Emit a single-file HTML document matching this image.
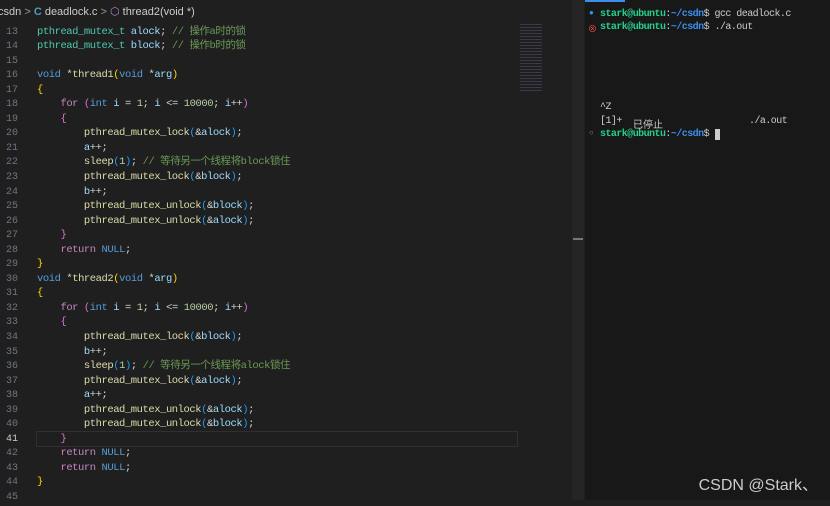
<!DOCTYPE html><html><head><meta charset="utf-8"><style>
body{margin:0;width:830px;height:500px;background:#1f1f1f;overflow:hidden;position:relative;font-family:"Liberation Mono","Noto Sans CJK SC",monospace;}
.bc{position:absolute;left:0;top:0;width:572px;height:22px;background:#1f1f1f;font:11px "Liberation Sans","Noto Sans CJK SC",sans-serif;color:#ccc;line-height:24px;white-space:nowrap}
.code{position:absolute;left:0;top:24.5px;width:572px;font-size:10.5px;letter-spacing:-0.44px}
.l{height:14.55px;line-height:14.55px;white-space:pre;position:relative}
.n{display:inline-block;width:18px;margin-right:19px;text-align:right;color:#6e7681;letter-spacing:0;font-size:10px}
.cur{outline:1px solid #303030}
.cur .n{color:#ccc}
.t{color:#4ec9b0}.v{color:#9cdcfe}.f{color:#dcdcaa}.k{color:#569cd6}.c{color:#c586c0}.m{color:#6a9955}.d{color:#b5cea8}.y{color:#ffd700}.p{color:#da70d6}.b{color:#179fff}.w{color:#d4d4d4}
.term{position:absolute;left:585px;top:0;right:0;bottom:0;background:#181818;font-size:10px;letter-spacing:-0.55px;color:#ccc}
.tl{position:absolute;left:15px;white-space:pre}
.g{color:#23d18b;font-weight:bold}.bl{color:#3b8eea;font-weight:bold}
</style></head><body>
<div class="bc"><span style="margin-left:-2px">csdn</span> <span style="color:#999">&gt;</span> <span style="color:#519aba;font-weight:bold">C</span> deadlock.c <span style="color:#999">&gt;</span> <span style="color:#b180d7">⬡</span> thread2(void *)</div>
<div class="code">
<div class="l"><span class="n">13</span><span class="t">pthread_mutex_t</span> <span class="v">alock</span><span class="w">;</span> <span class="m">// 操作a时的锁</span></div>
<div class="l"><span class="n">14</span><span class="t">pthread_mutex_t</span> <span class="v">block</span><span class="w">;</span> <span class="m">// 操作b时的锁</span></div>
<div class="l"><span class="n">15</span></div>
<div class="l"><span class="n">16</span><span class="k">void</span> <span class="w">*</span><span class="f">thread1</span><span class="y">(</span><span class="k">void</span> <span class="w">*</span><span class="v">arg</span><span class="y">)</span></div>
<div class="l"><span class="n">17</span><span class="y">{</span></div>
<div class="l"><span class="n">18</span>    <span class="c">for</span> <span class="p">(</span><span class="k">int</span> <span class="v">i</span> <span class="w">=</span> <span class="d">1</span><span class="w">;</span> <span class="v">i</span> <span class="w">&lt;=</span> <span class="d">10000</span><span class="w">;</span> <span class="v">i</span><span class="w">++</span><span class="p">)</span></div>
<div class="l"><span class="n">19</span>    <span class="p">{</span></div>
<div class="l"><span class="n">20</span>        <span class="f">pthread_mutex_lock</span><span class="b">(</span><span class="w">&amp;</span><span class="v">alock</span><span class="b">)</span><span class="w">;</span></div>
<div class="l"><span class="n">21</span>        <span class="v">a</span><span class="w">++;</span></div>
<div class="l"><span class="n">22</span>        <span class="f">sleep</span><span class="b">(</span><span class="d">1</span><span class="b">)</span><span class="w">;</span> <span class="m">// 等待另一个线程将block锁住</span></div>
<div class="l"><span class="n">23</span>        <span class="f">pthread_mutex_lock</span><span class="b">(</span><span class="w">&amp;</span><span class="v">block</span><span class="b">)</span><span class="w">;</span></div>
<div class="l"><span class="n">24</span>        <span class="v">b</span><span class="w">++;</span></div>
<div class="l"><span class="n">25</span>        <span class="f">pthread_mutex_unlock</span><span class="b">(</span><span class="w">&amp;</span><span class="v">block</span><span class="b">)</span><span class="w">;</span></div>
<div class="l"><span class="n">26</span>        <span class="f">pthread_mutex_unlock</span><span class="b">(</span><span class="w">&amp;</span><span class="v">alock</span><span class="b">)</span><span class="w">;</span></div>
<div class="l"><span class="n">27</span>    <span class="p">}</span></div>
<div class="l"><span class="n">28</span>    <span class="c">return</span> <span class="k">NULL</span><span class="w">;</span></div>
<div class="l"><span class="n">29</span><span class="y">}</span></div>
<div class="l"><span class="n">30</span><span class="k">void</span> <span class="w">*</span><span class="f">thread2</span><span class="y">(</span><span class="k">void</span> <span class="w">*</span><span class="v">arg</span><span class="y">)</span></div>
<div class="l"><span class="n">31</span><span class="y">{</span></div>
<div class="l"><span class="n">32</span>    <span class="c">for</span> <span class="p">(</span><span class="k">int</span> <span class="v">i</span> <span class="w">=</span> <span class="d">1</span><span class="w">;</span> <span class="v">i</span> <span class="w">&lt;=</span> <span class="d">10000</span><span class="w">;</span> <span class="v">i</span><span class="w">++</span><span class="p">)</span></div>
<div class="l"><span class="n">33</span>    <span class="p">{</span></div>
<div class="l"><span class="n">34</span>        <span class="f">pthread_mutex_lock</span><span class="b">(</span><span class="w">&amp;</span><span class="v">block</span><span class="b">)</span><span class="w">;</span></div>
<div class="l"><span class="n">35</span>        <span class="v">b</span><span class="w">++;</span></div>
<div class="l"><span class="n">36</span>        <span class="f">sleep</span><span class="b">(</span><span class="d">1</span><span class="b">)</span><span class="w">;</span> <span class="m">// 等待另一个线程将alock锁住</span></div>
<div class="l"><span class="n">37</span>        <span class="f">pthread_mutex_lock</span><span class="b">(</span><span class="w">&amp;</span><span class="v">alock</span><span class="b">)</span><span class="w">;</span></div>
<div class="l"><span class="n">38</span>        <span class="v">a</span><span class="w">++;</span></div>
<div class="l"><span class="n">39</span>        <span class="f">pthread_mutex_unlock</span><span class="b">(</span><span class="w">&amp;</span><span class="v">alock</span><span class="b">)</span><span class="w">;</span></div>
<div class="l"><span class="n">40</span>        <span class="f">pthread_mutex_unlock</span><span class="b">(</span><span class="w">&amp;</span><span class="v">block</span><span class="b">)</span><span class="w">;</span></div>
<div class="l cur" style="width:480px;margin-left:37px;text-indent:-37px"><span class="n">41</span>    <span class="p">}</span></div>
<div class="l"><span class="n">42</span>    <span class="c">return</span> <span class="k">NULL</span><span class="w">;</span></div>
<div class="l"><span class="n">43</span>    <span class="c">return</span> <span class="k">NULL</span><span class="w">;</span></div>
<div class="l"><span class="n">44</span><span class="y">}</span></div>
<div class="l"><span class="n">45</span></div>
</div>
<div style="position:absolute;left:520px;top:22px;width:22px;height:70px;opacity:.5;background:repeating-linear-gradient(#1f1f1f 0 2px,#557 2px 3px)"></div>
<div style="position:absolute;left:572px;top:0;width:12px;height:500px;background:#252525"></div>
<div style="position:absolute;left:573px;top:238px;width:10px;height:2px;background:#777"></div>
<div class="term">
<div style="position:absolute;left:0;top:0;width:40px;height:2px;background:#3b8eea"></div>
<div class="tl" style="top:9px;left:4px;color:#3b8eea;font-size:8px">●</div>
<div class="tl" style="top:9px"><span class="g">stark@ubuntu</span>:<span class="bl">~/csdn</span>$ gcc deadlock.c</div>
<div class="tl" style="top:22px;left:3px;color:#f14c4c;font-size:9px">⊗</div>
<div class="tl" style="top:22px"><span class="g">stark@ubuntu</span>:<span class="bl">~/csdn</span>$ ./a.out</div>
<div class="tl" style="top:102px">^Z</div>
<div class="tl" style="top:116px">[1]+</div>
<div class="tl" style="top:116px;left:48px;letter-spacing:0">已停止</div>
<div class="tl" style="top:116px;left:164px">./a.out</div>
<div class="tl" style="top:129px;left:4px;color:#888;font-size:8px">○</div>
<div class="tl" style="top:129px"><span class="g">stark@ubuntu</span>:<span class="bl">~/csdn</span>$ <span style="background:#ccc">&nbsp;</span></div>
<div style="position:absolute;right:12px;bottom:5px;font:16px 'Liberation Sans','Noto Sans CJK SC',sans-serif;color:#ccc;letter-spacing:0">CSDN @Stark、</div>
</div>
</body></html>
